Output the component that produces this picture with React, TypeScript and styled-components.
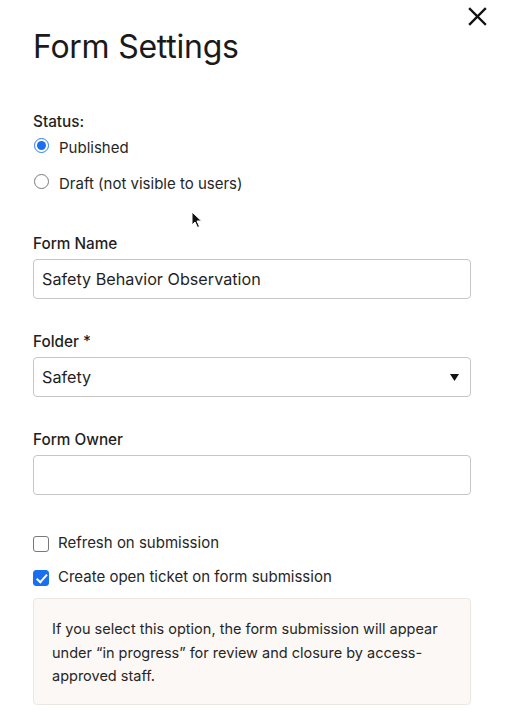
import React from "react";
import styled, { createGlobalStyle } from "styled-components";

const GlobalStyle = createGlobalStyle`
  html, body { margin: 0; padding: 0; background: #ffffff; }
  body {
    font-family: Inter, "Noto Sans", "Liberation Sans", sans-serif;
    color: #1f1f1f;
    -webkit-font-smoothing: antialiased;
  }
  * { box-sizing: border-box; }
`;

const Modal = styled.div`
  position: relative;
  width: 506px;
  height: 716px;
  overflow: hidden;
  background: #fff;
  padding: 27px 35px 0 33px;
  display: flex;
  flex-direction: column;
`;

const CloseButton = styled.button`
  position: absolute;
  top: 6px;
  right: 18px;
  width: 21px;
  height: 21px;
  padding: 0;
  border: none;
  background: transparent;
  display: flex;
  align-items: center;
  justify-content: center;
  cursor: pointer;
`;

const Title = styled.h1`
  margin: 0;
  font-size: 32px;
  line-height: 40px;
  font-weight: 400;
  color: #1a1a1a;
  letter-spacing: -0.25px;
`;

const Section = styled.div<{ $mt: number }>`
  margin-top: ${(p) => p.$mt}px;
  display: flex;
  flex-direction: column;
`;

const Label = styled.div`
  font-size: 15.3px;
  line-height: 20px;
  font-weight: 500;
  color: #1f1f1f;
`;

const OptionList = styled.div<{ $gap: number; $mt?: number }>`
  display: flex;
  flex-direction: column;
  gap: ${(p) => p.$gap}px;
  margin-top: ${(p) => p.$mt ?? 0}px;
`;

const RadioRow = styled.label`
  display: flex;
  align-items: flex-start;
  gap: 10px;
  font-size: 15px;
  line-height: 20px;
  color: #262626;
`;

const Radio = styled.input.attrs({ type: "radio" })`
  appearance: none;
  margin: 0 0 0 1px;
  width: 15px;
  height: 15px;
  border-radius: 50%;
  border: 1px solid #7a7a7a;
  background: #fff;
  flex-shrink: 0;
  position: relative;
  &:checked {
    border: 1.5px solid #2f7bf0;
  }
  &:checked::after {
    content: "";
    position: absolute;
    inset: 2px;
    border-radius: 50%;
    background: #1a6ff0;
  }
`;

const CheckRow = styled.label`
  display: flex;
  align-items: center;
  gap: 9px;
  font-size: 15px;
  line-height: 20px;
  color: #262626;
`;

const Checkbox = styled.input.attrs({ type: "checkbox" })`
  appearance: none;
  margin: 1px 0 0 0;
  width: 16px;
  height: 16px;
  border-radius: 3px;
  border: 1px solid #7a7a7a;
  background: #fff;
  flex-shrink: 0;
  position: relative;
  &:checked {
    border-color: #1a6ff0;
    background: #1a6ff0;
  }
  &:checked::after {
    content: "";
    position: absolute;
    left: 4.5px;
    top: 1px;
    width: 4px;
    height: 8.5px;
    border: solid #fff;
    border-width: 0 2.2px 2.2px 0;
    transform: rotate(42deg);
  }
`;

const TextInput = styled.input`
  margin-top: 5px;
  height: 40px;
  width: 100%;
  border: 1px solid #c6c6c6;
  border-radius: 4px;
  padding: 0 8px;
  font-family: inherit;
  font-size: 16.2px;
  color: #1f1f1f;
  background: #fff;
  outline: none;
`;

const SelectBox = styled.div`
  margin-top: 5px;
  height: 40px;
  width: 100%;
  border: 1px solid #c6c6c6;
  border-radius: 4px;
  padding: 0 11px 0 8px;
  display: flex;
  align-items: center;
  justify-content: space-between;
  font-size: 16.2px;
  color: #1f1f1f;
`;

const InfoBox = styled.div`
  margin-top: 11px;
  background: #fcf8f5;
  border: 1px solid #ece7e2;
  border-radius: 4px;
  padding: 18px 18px 16px 18px;
  font-size: 14.5px;
  line-height: 23.5px;
  color: #262626;
`;

const Pointer = styled.svg`
  position: absolute;
  left: 191px;
  top: 211px;
  pointer-events: none;
`;

export default function App() {
  return (
    <>
      <GlobalStyle />
      <Modal>
        <CloseButton aria-label="Close">
          <svg width="19" height="19" viewBox="0 0 19 19">
            <path
              d="M2 2 L17 17 M17 2 L2 17"
              stroke="#111"
              strokeWidth="2.4"
              strokeLinecap="square"
            />
          </svg>
        </CloseButton>

        <Title>Form Settings</Title>

        <Section $mt={45}>
          <Label>Status:</Label>
          <OptionList $gap={16} $mt={6}>
            <RadioRow>
              <Radio name="status" defaultChecked />
              Published
            </RadioRow>
            <RadioRow>
              <Radio name="status" />
              Draft (not visible to users)
            </RadioRow>
          </OptionList>
        </Section>

        <Section $mt={40}>
          <Label>Form Name</Label>
          <TextInput defaultValue="Safety Behavior Observation" />
        </Section>

        <Section $mt={33}>
          <Label>Folder *</Label>
          <SelectBox>
            <span>Safety</span>
            <svg width="9" height="7" viewBox="0 0 9 7">
              <path d="M0 0 H9 L4.5 7 Z" fill="#111" />
            </svg>
          </SelectBox>
        </Section>

        <Section $mt={33}>
          <Label>Form Owner</Label>
          <TextInput />
        </Section>

        <Section $mt={38}>
          <OptionList $gap={14}>
            <CheckRow>
              <Checkbox />
              Refresh on submission
            </CheckRow>
            <CheckRow>
              <Checkbox defaultChecked />
              Create open ticket on form submission
            </CheckRow>
          </OptionList>
          <InfoBox>
            If you select this option, the form submission will appear under
            “in progress” for review and closure by access-approved staff.
          </InfoBox>
        </Section>

        <Pointer width="12" height="18" viewBox="0 0 12 18">
          <path
            d="M1 1 L1 14 L4 11 L6.5 16.5 L8.5 15.5 L6 10 L10.5 10 Z"
            fill="#111"
            stroke="#fff"
            strokeWidth="1"
          />
        </Pointer>
      </Modal>
    </>
  );
}
